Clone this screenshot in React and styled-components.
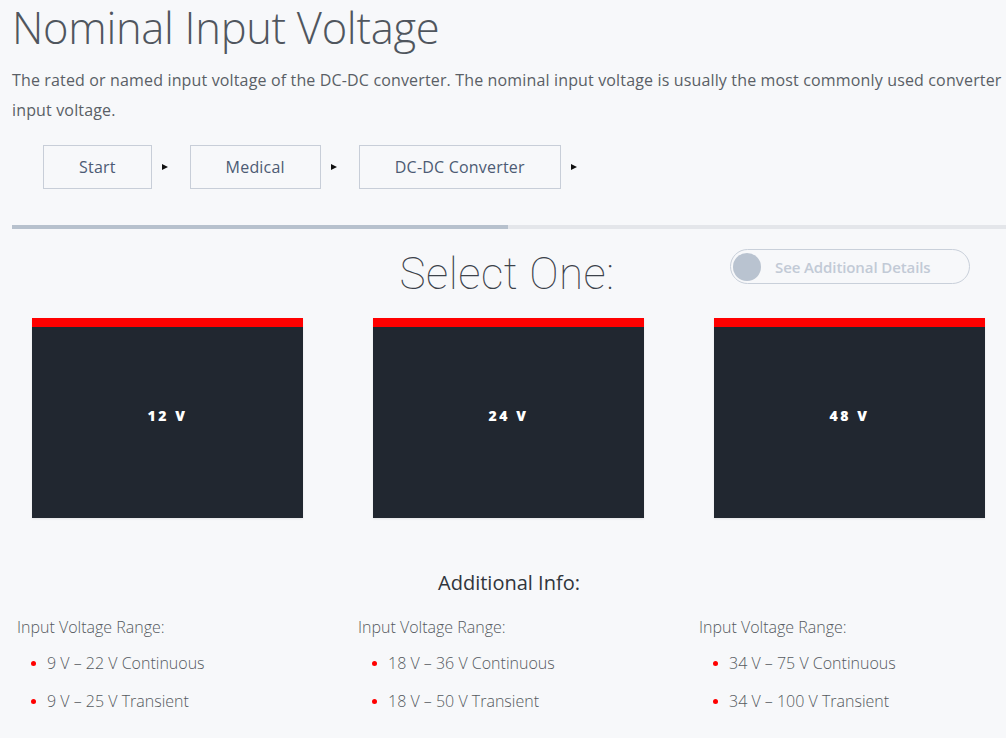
import React from 'react';
import styled, { createGlobalStyle } from 'styled-components';

const GlobalStyle = createGlobalStyle`
    html, body {
        margin: 0;
        padding: 0;
        background: #f7f8fa;
    }
    body {
        font-family: "Open Sans", "Liberation Sans", sans-serif;
        color: #444;
    }
`;

const Page = styled.div`
    width: 1006px;
    height: 738px;
    overflow: hidden;
`;
Page.displayName = 'Page';

const Header = styled.div`
    padding: 0 0 0 12px;
`;
Header.displayName = 'Header';

const Title = styled.h1`
    margin: 0;
    font-weight: 300;
    font-size: 43.5px;
    line-height: 56px;
    color: #50565e;
    letter-spacing: -0.3px;
`;
Title.displayName = 'Title';

const Description = styled.p`
    margin: 9px 0 0;
    font-size: 16px;
    line-height: 30px;
    color: #5a5f66;
    font-weight: 400;
    letter-spacing: 0.15px;
`;
Description.displayName = 'Description';

const Crumbs = styled.div`
    display: flex;
    align-items: center;
    margin: 20px 0 0 43px;
`;
Crumbs.displayName = 'Crumbs';

const Crumb = styled.div`
    height: 44px;
    box-sizing: border-box;
    padding: 0 35px;
    display: flex;
    align-items: center;
    border: 1px solid #c8ced8;
    font-size: 16px;
    letter-spacing: 0.2px;
    color: #4d5b74;
`;
Crumb.displayName = 'Crumb';

const Arrow = styled.span`
    width: 0;
    height: 0;
    margin: 0 ${({ last }) => (last ? 0 : 22)}px 0 10px;
    border-top: 3.5px solid transparent;
    border-bottom: 3.5px solid transparent;
    border-left: 6px solid #111;
`;
Arrow.displayName = 'Arrow';

const Progress = styled.div`
    margin: 36px 0 0 12px;
    height: 4px;
    background: #e4e6ea;
`;
Progress.displayName = 'Progress';

const ProgressFill = styled.div`
    height: 100%;
    background: #b7c1cd;
`;
ProgressFill.displayName = 'ProgressFill';

const SelectRow = styled.div`
    position: relative;
    height: 89px;
    display: flex;
    justify-content: center;
`;
SelectRow.displayName = 'SelectRow';

const SelectTitle = styled.h2`
    margin: 17px 0 0 8px;
    font-family: Roboto, "Open Sans", sans-serif;
    font-weight: 100;
    font-size: 44px;
    line-height: 56px;
    color: #3c424a;
    letter-spacing: 0.5px;
`;
SelectTitle.displayName = 'SelectTitle';

const Toggle = styled.button`
    position: absolute;
    left: 730px;
    top: 20px;
    width: 240px;
    height: 35px;
    box-sizing: border-box;
    border: 1px solid #c9d0da;
    border-radius: 18px;
    background: transparent;
    display: flex;
    align-items: center;
    padding: 0 0 0 2px;
    cursor: pointer;
`;
Toggle.displayName = 'Toggle';

const Knob = styled.span`
    width: 28px;
    height: 28px;
    border-radius: 50%;
    background: #b9c3d0;
`;
Knob.displayName = 'Knob';

const ToggleText = styled.span`
    margin-left: 14px;
    font-family: "Open Sans", sans-serif;
    font-weight: 600;
    font-size: 15px;
    letter-spacing: -0.1px;
    color: #c2cad6;
`;
ToggleText.displayName = 'ToggleText';

const Grid = styled.div`
    display: grid;
    grid-template-columns: repeat(3, 341px);
    padding-left: 17px;
`;
Grid.displayName = 'Grid';

const Card = styled.div`
    margin-left: 15px;
    width: 271px;
    height: 200px;
    box-sizing: border-box;
    background: #212730;
    border-top: 9px solid #ff0000;
    display: flex;
    align-items: center;
    justify-content: center;
    box-shadow: 0 1px 2px rgba(0, 0, 0, 0.08);
    cursor: pointer;
`;
Card.displayName = 'Card';

const CardLabel = styled.span`
    margin-top: -14px;
    font-family: "Open Sans", sans-serif;
    font-weight: 800;
    font-size: 14px;
    letter-spacing: 2.5px;
    color: #ffffff;
`;
CardLabel.displayName = 'CardLabel';

const InfoTitle = styled.h3`
    margin: 51px 0 0;
    text-align: center;
    font-weight: 400;
    font-size: 20px;
    line-height: 28px;
    color: #30353c;
    padding-left: 12px;
`;
InfoTitle.displayName = 'InfoTitle';

const InfoGrid = styled(Grid)`
    margin-top: 19px;
`;
InfoGrid.displayName = 'InfoGrid';

const InfoLabel = styled.div`
    font-size: 16px;
    font-weight: 300;
    line-height: 22px;
    color: #555a60;
`;
InfoLabel.displayName = 'InfoLabel';

const List = styled.ul`
    list-style: none;
    margin: 14px 0 0;
    padding: 0 0 0 14px;
`;
List.displayName = 'List';

const Item = styled.li`
    display: flex;
    align-items: center;
    font-size: 16px;
    font-weight: 300;
    line-height: 22px;
    color: #555a60;
    margin-bottom: 16px;

    &::before {
        content: '';
        width: 5px;
        height: 5px;
        border-radius: 50%;
        background: #ff0000;
        margin-right: 11px;
    }
`;
Item.displayName = 'Item';

const options = [
    { label: '12 V', ranges: ['9 V – 22 V Continuous', '9 V – 25 V Transient'] },
    { label: '24 V', ranges: ['18 V – 36 V Continuous', '18 V – 50 V Transient'] },
    { label: '48 V', ranges: ['34 V – 75 V Continuous', '34 V – 100 V Transient'] }
];

const crumbs = ['Start', 'Medical', 'DC-DC Converter'];

const App = () => {
    return (
        <Page>
            <GlobalStyle />
            <Header>
                <Title>Nominal Input Voltage</Title>
                <Description>
                    The rated or named input voltage of the DC-DC converter. The nominal input voltage is usually the most commonly used converter input voltage.
                </Description>
            </Header>
            <Crumbs>
                {crumbs.map((c, i) => (
                    <React.Fragment key={c}>
                        <Crumb>{c}</Crumb>
                        <Arrow last={i === crumbs.length - 1} />
                    </React.Fragment>
                ))}
            </Crumbs>
            <Progress>
                <ProgressFill style={{ width: `${(496 / 994) * 100}%` }} />
            </Progress>
            <SelectRow>
                <SelectTitle>Select One:</SelectTitle>
                <Toggle type="button">
                    <Knob />
                    <ToggleText>See Additional Details</ToggleText>
                </Toggle>
            </SelectRow>
            <Grid>
                {options.map(o => (
                    <Card key={o.label}>
                        <CardLabel>{o.label}</CardLabel>
                    </Card>
                ))}
            </Grid>
            <InfoTitle>Additional Info:</InfoTitle>
            <InfoGrid>
                {options.map(o => (
                    <div key={o.label}>
                        <InfoLabel>Input Voltage Range:</InfoLabel>
                        <List>
                            {o.ranges.map(r => <Item key={r}>{r}</Item>)}
                        </List>
                    </div>
                ))}
            </InfoGrid>
        </Page>
    );
};

export default App;
